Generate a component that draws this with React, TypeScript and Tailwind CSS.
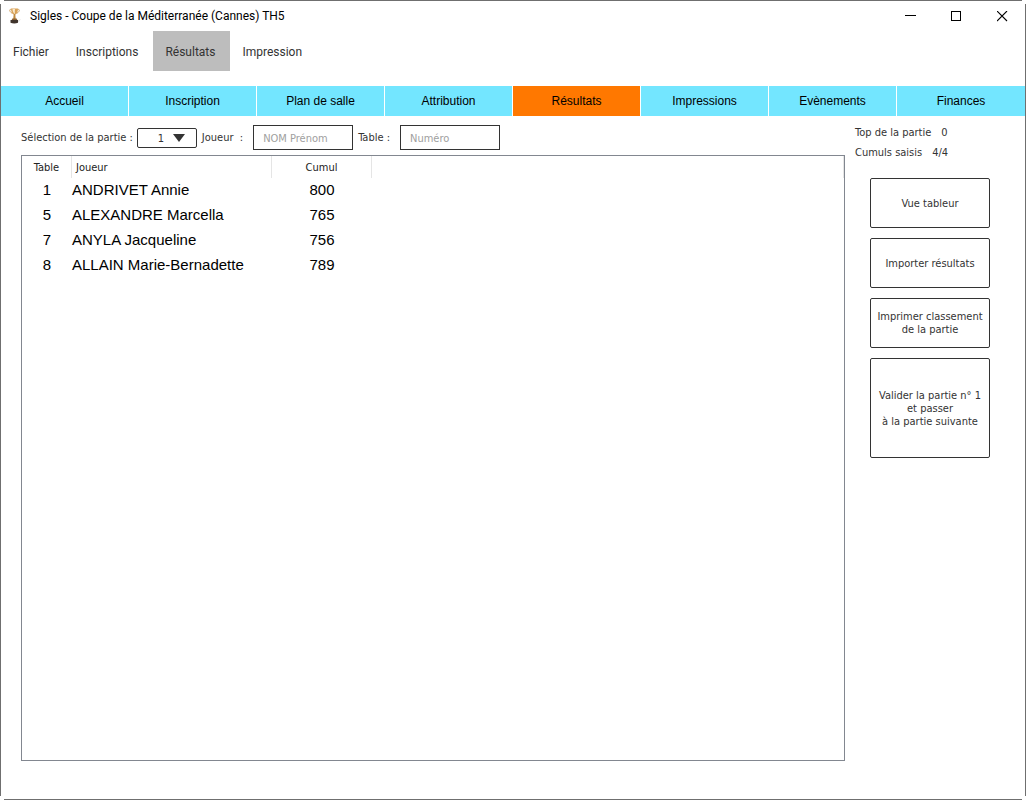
import React, { useState } from 'react'

const menus = ['Fichier', 'Inscriptions', 'Résultats', 'Impression']

const tabs = [
  'Accueil',
  'Inscription',
  'Plan de salle',
  'Attribution',
  'Résultats',
  'Impressions',
  'Evènements',
  'Finances',
]

const players = [
  { table: 1, name: 'ANDRIVET Annie', total: 800 },
  { table: 5, name: 'ALEXANDRE Marcella', total: 765 },
  { table: 7, name: 'ANYLA Jacqueline', total: 756 },
  { table: 8, name: 'ALLAIN Marie-Bernadette', total: 789 },
]

export default function App() {
  return (
    <div className="relative flex min-h-screen flex-col border border-[#6f6f6f] bg-white font-['DejaVu_Sans_Condensed','Noto_Sans',sans-serif] text-[11px] text-[#333]">
      <WindowCorners />
      <TitleBar />
      <MenuBar />
      <Tabs />
      <main className="flex flex-1 pb-[38px] pl-5">
        <section className="flex min-w-0 flex-1 flex-col pt-[9px]">
          <Filters />
          <Results />
        </section>
        <SidePanel />
      </main>
    </div>
  )
}

function WindowCorners() {
  return (
    <>
      <span className="absolute -left-px -top-px size-1 bg-white" />
      <span className="absolute -right-px -top-px size-1 bg-white" />
      <span className="absolute -bottom-px -left-px size-1 bg-white" />
      <span className="absolute -bottom-px -right-px size-1 bg-white" />
    </>
  )
}

function TitleBar() {
  return (
    <header className="flex h-[30px] items-center justify-between pl-[5px] text-black">
      <div className="flex items-center gap-2">
        <Trophy />
        <h1 className="font-[Roboto,sans-serif] text-[12px]">Sigles - Coupe de la Méditerranée (Cannes) TH5</h1>
      </div>
      <div className="flex">
        <button aria-label="Réduire" className="flex h-[30px] w-[46px] items-center justify-center">
          <svg width="11" height="11" viewBox="0 0 11 11" shapeRendering="crispEdges">
            <path d="M0 4.500h11" stroke="#000" />
          </svg>
        </button>
        <button aria-label="Agrandir" className="flex h-[30px] w-[46px] items-center justify-center">
          <svg width="11" height="11" viewBox="0 0 11 11" shapeRendering="crispEdges">
            <path d="M.5 -.5h9v10h-9z" stroke="#000" fill="none" overflow="visible" />
            <path d="M.5 .5h9" stroke="#000" />
          </svg>
        </button>
        <button aria-label="Fermer" className="flex h-[30px] w-[46px] items-center justify-center">
          <svg width="11" height="11" viewBox="0 0 11 11">
            <path d="M0 0l10 10M10 0l-10 10" stroke="#000" strokeWidth="1.1" />
          </svg>
        </button>
      </div>
    </header>
  )
}

function Trophy() {
  return (
    <svg width="16" height="16" viewBox="0 0 16 16">
      <path d="M9 14l6-3-2.500 3.200z" fill="#e6e3e0" />
      <path d="M5.200 1.500C2.800 .8 3.400 4 6.500 5.500M11.800 1.500c2.400-.7 1.800 2.500-1.300 4" fill="none" stroke="#d0a060" strokeWidth="1" />
      <path d="M5 .5h7c0 3-.9 5-2.700 6H7.700C5.900 5.500 5 3.500 5 .5z" fill="#d9a257" />
      <path d="M6.500 1h2.500c-.2 2-.3 3.500 0 5C7.300 5 6.600 3.500 6.500 1z" fill="#f8e8cc" />
      <path d="M7.700 6h1.600l.4 5H7.200z" fill="#c08a40" />
      <path d="M6.300 10.500h4.400l.7 1.700H5.600z" fill="#8c6236" />
      <path d="M4.500 12h7.500v2.700c-2 1-5.500 1-7.500 0z" fill="#3f332b" />
    </svg>
  )
}

function MenuBar() {
  return (
    <nav className="flex h-10 font-[Roboto,sans-serif] text-[12px]">
      {menus.map((menu) => (
        <button key={menu} className={`pl-3 pr-[15px] pt-0.5 ${menu === 'Résultats' ? 'bg-[#bdbdbd]' : ''}`}>
          {menu}
        </button>
      ))}
    </nav>
  )
}

function Tabs() {
  const [active, setActive] = useState('Résultats')

  return (
    <nav className="mt-[15px] grid h-[30px] grid-cols-8 font-['Liberation_Sans',sans-serif] text-[12px] text-black">
      {tabs.map((tab) => (
        <button
          key={tab}
          onClick={() => setActive(tab)}
          className={`border-r border-white last:border-r-0 ${tab === active ? 'bg-[#ff7800]' : 'bg-[#73e6ff]'}`}
        >
          {tab}
        </button>
      ))}
    </nav>
  )
}

function Filters() {
  return (
    <form className="flex items-center">
      <label htmlFor="round" className="pt-0.5">Sélection de la partie :</label>
      <div className="relative ml-1">
        <select id="round" className="block h-5 w-[60px] appearance-none rounded-xs border border-[#333] pl-5 pt-0.5 text-[11px]">
          <option>1</option>
          <option>2</option>
          <option>3</option>
        </select>
        <svg className="pointer-events-none absolute right-3 top-1.5" width="12" height="8" viewBox="0 0 12 8">
          <path d="M0 0h12L6 8z" fill="#333" />
        </svg>
      </div>
      <label htmlFor="player" className="ml-[5px] whitespace-pre pt-0.5">Joueur  :</label>
      <input
        id="player"
        placeholder="NOM Prénom"
        className="ml-2.5 h-[25px] w-[100px] border border-[#333] px-[9px] pt-0.5 placeholder:text-[#a0a0a0]"
      />
      <label htmlFor="table" className="ml-[5px] pt-0.5">Table :</label>
      <input
        id="table"
        placeholder="Numéro"
        className="ml-2.5 h-[25px] w-[100px] border border-[#333] px-[9px] pt-0.5 placeholder:text-[#a0a0a0]"
      />
    </form>
  )
}

function Results() {
  return (
    <div className="mt-[5px] flex-1 border border-[#828790]">
      <table className="w-full table-fixed border-separate border-spacing-0">
        <thead>
          <tr className="h-[22px] text-[#222]">
            <th className="w-[50px] border-r border-[#e5e5e5] p-0 pt-0.5 font-normal">Table</th>
            <th className="w-[200px] border-r border-[#e5e5e5] p-0 pl-1 pt-0.5 text-left font-normal">Joueur</th>
            <th className="w-[100px] border-r border-[#e5e5e5] p-0 pt-0.5 font-normal">Cumul</th>
            <th className="border-r border-[#e5e5e5] p-0" />
          </tr>
        </thead>
        <tbody className="font-['Liberation_Sans',sans-serif] text-[15px] text-black">
          {players.map((player) => (
            <tr key={player.table} className="h-[25px]">
              <td className="p-0 text-center">{player.table}</td>
              <td className="p-0">{player.name}</td>
              <td className="p-0 text-center">{player.total}</td>
              <td className="p-0" />
            </tr>
          ))}
        </tbody>
      </table>
    </div>
  )
}

function SidePanel() {
  return (
    <aside className="w-[180px] shrink-0 pl-2.5 pt-[7px]">
      <dl className="leading-5">
        <div className="flex gap-2.5">
          <dt>Top de la partie</dt>
          <dd>0</dd>
        </div>
        <div className="flex gap-2.5">
          <dt>Cumuls saisis</dt>
          <dd>4/4</dd>
        </div>
      </dl>
      <div className="ml-[15px] mt-[15px] flex w-[120px] flex-col gap-2.5 leading-[13px]">
        <button className="h-[50px] rounded-xs border border-[#333]">Vue tableur</button>
        <button className="h-[50px] rounded-xs border border-[#333]">Importer résultats</button>
        <button className="h-[50px] rounded-xs border border-[#333]">
          Imprimer classement
          <br />
          de la partie
        </button>
        <button className="h-[100px] rounded-xs border border-[#333]">
          Valider la partie n° 1
          <br />
          et passer
          <br />
          à la partie suivante
        </button>
      </div>
    </aside>
  )
}
